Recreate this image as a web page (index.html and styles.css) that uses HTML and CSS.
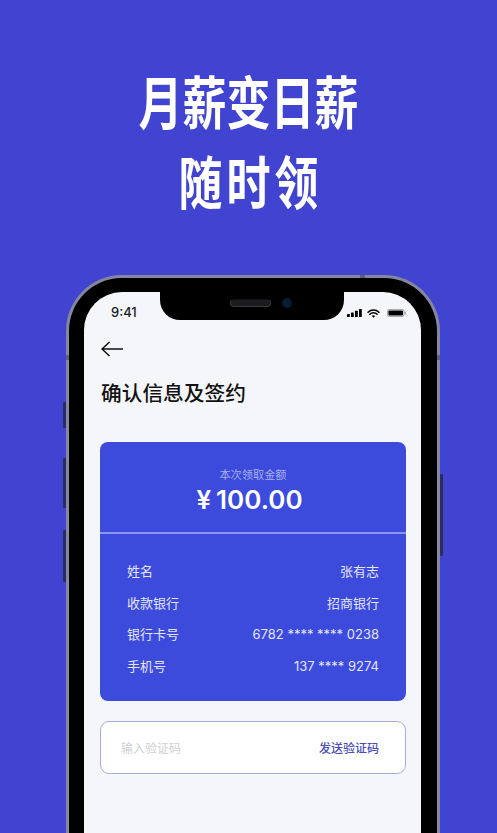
FILE: index.html
```html
<!DOCTYPE html>
<html lang="zh-CN">
<head>
<meta charset="utf-8">
<title>月薪变日薪</title>
<link rel="stylesheet" href="styles.css">
</head>
<body>
<main class="poster">
  <h1 class="headline">月薪变日薪<br><span class="headline-second">随时领</span></h1>
  <div class="phone">
    <span class="side-btn mute"></span>
    <span class="side-btn vol-up"></span>
    <span class="side-btn vol-down"></span>
    <span class="side-btn power"></span>
    <span class="band band-top"></span>
    <span class="band band-left"></span>
    <span class="band band-right"></span>
    <div class="screen">
      <div class="notch">
        <span class="speaker"></span>
        <span class="camera"></span>
      </div>
      <div class="status">
        <span class="time">9:41</span>
        <span class="status-icons">
          <svg class="signal" viewBox="0 0 15 8" width="15" height="8"><rect x="0" y="5" width="2.8" height="3" rx=".5"/><rect x="4" y="3.6" width="2.8" height="4.4" rx=".5"/><rect x="8" y="1.8" width="2.8" height="6.2" rx=".5"/><rect x="12" y="0" width="2.8" height="8" rx=".5"/></svg>
          <svg class="wifi" viewBox="0 0 14 10" width="13" height="9"><path d="M1 3.6a8.6 8.6 0 0 1 12 0M3 5.8a5.7 5.7 0 0 1 8 0" fill="none" stroke="#000" stroke-width="1.8" stroke-linecap="round"/><path d="M5.2 7.7a2.6 2.6 0 0 1 3.6 0L7 9.8z"/></svg>
          <svg class="battery" viewBox="0 0 19 8" width="19" height="8"><rect x=".4" y=".4" width="16.6" height="7.2" rx="2" fill="none" stroke="#8a8a8f" stroke-width=".8"/><rect x="1.4" y="1.4" width="14.6" height="5.2" rx="1"/><rect x="17.8" y="2.6" width="1" height="2.8" rx=".5" fill="#8a8a8f"/></svg>
        </span>
      </div>
      <div class="content">
        <svg class="back" viewBox="0 0 22 16" width="22" height="16"><path d="M22 8H1M8.5 1 1 8l7.5 7" fill="none" stroke="#111" stroke-width="1.5"/></svg>
        <h2 class="page-title">确认信息及签约</h2>
        <section class="card">
          <div class="amount-box">
            <div class="amount-label">本次领取金额</div>
            <div class="amount"><span class="yen">¥</span>100.00</div>
          </div>
          <dl class="rows">
            <div class="row"><dt>姓名</dt><dd>张有志</dd></div>
            <div class="row"><dt>收款银行</dt><dd>招商银行</dd></div>
            <div class="row"><dt>银行卡号</dt><dd>6782 **** **** 0238</dd></div>
            <div class="row"><dt>手机号</dt><dd>137 **** 9274</dd></div>
          </dl>
        </section>
        <div class="code-box">
          <span class="placeholder">输入验证码</span>
          <span class="send">发送验证码</span>
        </div>
      </div>
    </div>
  </div>
</main>
</body>
</html>
```

FILE: styles.css
```css
* { box-sizing: border-box; }
html, body { margin: 0; padding: 0; }
body {
  width: 497px;
  height: 833px;
  overflow: hidden;
  background: #4044d0;
  font-family: Inter, "Noto Sans CJK SC", sans-serif;
}
.poster { display: flex; flex-direction: column; align-items: center; height: 833px; overflow: hidden; }
.headline {
  flex: none;
  margin: 79px 0 0;
  height: 122px;
  font-family: "Noto Sans CJK SC", sans-serif;
  font-size: 44px;
  line-height: 61px;
  font-weight: 700;
  color: #fff;
  text-align: center;
  transform: scaleY(1.3);
}
.headline-second { letter-spacing: 4px; padding-left: 4px; }
.phone {
  position: relative;
  flex: none;
  width: 374px;
  height: 620px;
  margin-top: 74px;
  margin-left: 9px;
  padding: 14px 16px 0 15px;
  background: #000;
  border: 3px solid #85869f;
  border-bottom: 0;
  border-radius: 56px 56px 0 0;
}
.side-btn { position: absolute; width: 3px; background: #2b2c5e; border-radius: 1px; }
.mute { left: -6px; top: 124px; height: 26px; }
.vol-up { left: -6px; top: 180px; height: 50px; }
.vol-down { left: -6px; top: 252px; height: 52px; }
.power { right: -6px; top: 196px; height: 82px; }
.band { position: absolute; background: #5f607a; }
.band-top { top: -3px; left: 291px; width: 5px; height: 3px; }
.band-left { left: -3px; top: 77px; width: 3px; height: 5px; }
.band-right { right: -3px; top: 77px; width: 3px; height: 5px; }
.screen {
  position: relative;
  height: 100%;
  background: #f4f6fa;
  border-radius: 38px 38px 0 0;
  overflow: hidden;
}
.notch {
  position: absolute;
  left: 76px;
  top: 0;
  width: 184px;
  height: 28px;
  background: #000;
  border-radius: 0 0 20px 20px;
  display: flex;
  justify-content: center;
  align-items: center;
  gap: 11px;
  padding: 0 0 7px 18px;
}
.speaker { width: 41px; height: 8px; border-radius: 4px; background: #1c1c1e; border: 1px solid #3a3a3e; border-top-color: #111; }
.camera { width: 10px; height: 10px; border-radius: 50%; background: #0c1a33; }
.status { display: flex; justify-content: space-between; align-items: center; height: 20px; margin-top: 10px; padding: 0 15px 0 27px; }
.time { font-size: 13px; font-weight: 500; color: #1b1b1f; line-height: 20px; }
.status-icons { display: flex; align-items: center; gap: 5px; margin-top: 2px; }
.status-icons svg { display: block; fill: #000; }
.battery { margin-left: 2px; }
.content { padding: 19px 15px 0 16px; }
.back { display: block; margin-left: 1px; }
.page-title {
  margin: 20px 0 0 1px;
  font-size: 20.7px;
  line-height: 30px;
  font-weight: 500;
  color: #111;
  font-family: "Noto Sans CJK SC", sans-serif;
}
.card {
  margin-top: 35px;
  background: #3c4bdb;
  border-radius: 8px;
  height: 259px;
  color: #fff;
}
.amount-box {
  height: 92px;
  padding-top: 24px;
  text-align: center;
  border-bottom: 2px solid #8a93ee;
}
.amount-label { font-size: 11.2px; line-height: 16px; color: #a9aef2; font-family: "Noto Sans CJK SC", sans-serif; }
.amount { font-size: 26px; line-height: 34px; font-weight: 600; margin-top: 1px; padding-right: 7px; }
.yen { margin-right: 5px; }
.rows { margin: 0; padding: 27px 27px 0; display: flex; flex-direction: column; gap: 11.5px; }
.row { display: flex; justify-content: space-between; font-size: 13px; line-height: 20px; color: #e3e5fb; }
.row dt, .row dd { margin: 0; font-family: Inter, "Noto Sans CJK SC", sans-serif; }
.code-box {
  display: flex;
  justify-content: space-between;
  align-items: center;
  height: 53px;
  margin-top: 20px;
  padding: 0 26px 0 20px;
  background: #fff;
  border: 1px solid #a9abd6;
  border-radius: 9px;
  font-size: 12px;
  font-family: "Noto Sans CJK SC", sans-serif;
}
.placeholder { color: #d0d0d4; }
.send { color: #4a4fb8; font-weight: 500; }
```
